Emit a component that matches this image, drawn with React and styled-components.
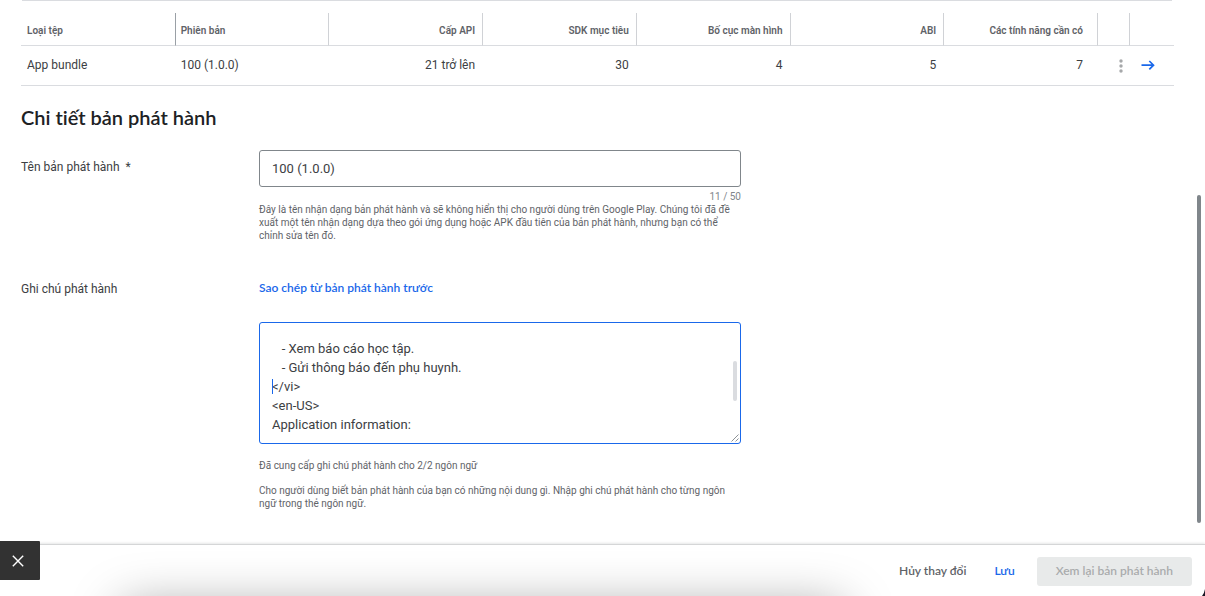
import React from "react";
import styled, { createGlobalStyle } from "styled-components";

const BLUE = "#1a68ea";
const ROBOTO = 'Roboto, "Noto Sans", sans-serif';
const DISPLAY = 'Lato, "Noto Sans", sans-serif';

const GlobalStyle = createGlobalStyle`
  *, *::before, *::after { box-sizing: border-box; }
  body {
    margin: 0;
    background: #fff;
    color: #3c4043;
    font-family: ${ROBOTO};
    font-size: 12px;
    line-height: 16px;
    font-variant-ligatures: none;
  }
`;

const Page = styled.div`
  position: relative;
  display: flex;
  flex-direction: column;
  min-height: 100vh;
  overflow: hidden;
`;

const Main = styled.main`
  flex: 1;
  padding: 0 31px 32px 21px;
`;

const TopRule = styled.hr`
  height: 1px;
  margin: 0 2px 12px 1px;
  border: 0;
  background: #dadce0;
`;

const Table = styled.table`
  width: 100%;
  table-layout: fixed;
  border-collapse: separate;
  border-spacing: 0;
`;

const HeadCell = styled.th`
  height: 33px;
  padding: 4px ${(p) => (p.$wide ? 14 : 7)}px 0 ${(p) => (p.$first ? 6 : 5)}px;
  border-left: ${(p) => (p.$first ? "0" : `1px solid ${p.$strong ? "#9aa0a6" : "#d0d2d6"}`)};
  border-bottom: 1px solid #dadce0;
  color: #5f6368;
  font-size: 10px;
  font-weight: 600;
  text-align: ${(p) => (p.$left ? "left" : "right")};
  white-space: nowrap;
`;

const Cell = styled.td`
  height: 40px;
  padding: 0 ${(p) => (p.$wide ? 14 : 7)}px 1px 6px;
  border-bottom: 1px solid #dadce0;
  text-align: ${(p) => (p.$left ? "left" : "right")};
  white-space: nowrap;
`;

const ActionCell = styled(Cell)`
  padding: 0 0 1px;
  text-align: left;
`;

const Col = styled.col`
  width: ${(p) => p.$width}px;
`;

const IconButton = styled.button`
  display: flex;
  align-items: center;
  justify-content: center;
  width: 16px;
  height: 16px;
  margin-left: ${(p) => p.$inset}px;
  padding: 0;
  border: 0;
  background: none;
  cursor: pointer;
`;

const Title = styled.h2`
  margin: 19px 0 21px;
  color: #202124;
  font-family: ${DISPLAY};
  font-size: 20px;
  font-weight: 600;
  line-height: 24px;
`;

const FormRow = styled.div`
  display: grid;
  grid-template-columns: 238px minmax(0, 482px);
  margin-top: ${(p) => p.$gap}px;
`;

const Label = styled.label`
  padding-top: ${(p) => p.$top}px;
  white-space: pre;
`;

const Field = styled.div`
  display: flex;
  flex-direction: column;
`;

const TextInput = styled.input`
  width: 100%;
  height: 37px;
  padding: 0 12px;
  border: 1px solid #80868b;
  border-radius: 3px;
  outline: 0;
  background: #fff;
  color: #3c4043;
  font: 13px ${ROBOTO};
`;

const Counter = styled.div`
  margin-top: 3px;
  color: #80868b;
  font-size: 10px;
  line-height: 13px;
  text-align: right;
`;

const Hint = styled.p`
  margin: ${(p) => p.$gap || 0}px 0 0;
  color: #5f6368;
  font-size: 10px;
  line-height: 13px;
`;

const CopyButton = styled.button`
  align-self: flex-start;
  padding: 0;
  border: 0;
  background: none;
  color: ${BLUE};
  font: 600 12px/16px ${DISPLAY};
  cursor: pointer;
`;

const NotesBox = styled.div`
  position: relative;
  display: flex;
  height: 122px;
  margin-top: 26px;
  padding: 16px 12px 8px;
  border: 1px solid ${BLUE};
  border-radius: 3px;
`;

const Notes = styled.textarea`
  width: 100%;
  padding: 0;
  border: 0;
  outline: 0;
  resize: none;
  overflow: hidden;
  background: none;
  color: #3c4043;
  font: 13px/19px ${ROBOTO};
`;

const Caret = styled.span`
  position: absolute;
  top: 56px;
  left: 12px;
  width: 1px;
  height: 15px;
  background: ${BLUE};
`;

const NotesThumb = styled.span`
  position: absolute;
  top: 38px;
  right: 3px;
  width: 4px;
  height: 40px;
  border-radius: 2px;
  background: #dadce0;
`;

const Grip = styled.svg`
  position: absolute;
  right: 1px;
  bottom: 1px;
`;

const PageThumb = styled.div`
  position: absolute;
  top: 195px;
  right: 4px;
  width: 4px;
  height: 328px;
  border-radius: 2px;
  background: #80868b;
`;

const Footer = styled.footer`
  position: relative;
  display: flex;
  align-items: center;
  justify-content: flex-end;
  height: 52px;
  padding: 2px 13px 0 0;
  border-top: 1px solid #d5d6d7;
  box-shadow: 0 -1px 2px rgba(60, 64, 67, 0.12);
`;

const ShadowLayer = styled.div`
  position: absolute;
  inset: 0;
  overflow: hidden;
  pointer-events: none;

  &::after {
    content: "";
    position: absolute;
    top: 100%;
    left: 10%;
    right: 30%;
    height: 60px;
    margin-top: 10px;
    border-radius: 10px;
    box-shadow: 0 0 50px rgba(0, 0, 0, 0.36);
  }
`;

const FooterButton = styled.button`
  position: relative;
  height: 29px;
  padding: 0 ${(p) => p.$pad || 14}px 2px;
  border: 0;
  border-radius: 3px;
  background: ${(p) => (p.$filled ? "#e8eaea" : "transparent")};
  color: ${(p) => p.$color};
  font: 600 12px/16px ${DISPLAY};
`;

const SaveButton = styled(FooterButton)`
  margin-right: 8px;
`;

const CloseButton = styled.button`
  position: absolute;
  bottom: 16px;
  left: 0;
  display: flex;
  align-items: center;
  width: 40px;
  height: 39px;
  padding: 0 0 0 12px;
  border: 0;
  border-radius: 0 1px 1px 0;
  background: #323232;
`;

const Corner = styled.svg`
  position: absolute;
  right: 0;
  bottom: 0;
`;

const columns = [
  { label: "Loại tệp", value: "App bundle", left: true, first: true },
  { label: "Phiên bản", value: "100 (1.0.0)", left: true, strong: true },
  { label: "Cấp API", value: "21 trở lên" },
  { label: "SDK mục tiêu", value: "30" },
  { label: "Bố cục màn hình", value: "4" },
  { label: "ABI", value: "5" },
  { label: "Các tính năng cần có", value: "7", wide: true },
];

const notes = `   - Xem báo cáo học tập.
   - Gửi thông báo đến phụ huynh.
</vi>
<en-US>
Application information:`;

export default function App() {
  return (
    <Page>
      <GlobalStyle />
      <Main>
        <TopRule />
        <Table>
          <colgroup>
            {columns.map((c) => (
              <col key={c.label} />
            ))}
            <Col $width={32} />
            <Col $width={45} />
          </colgroup>
          <thead>
            <tr>
              {columns.map((c) => (
                <HeadCell key={c.label} $left={c.left} $first={c.first} $strong={c.strong} $wide={c.wide}>
                  {c.label}
                </HeadCell>
              ))}
              <HeadCell />
              <HeadCell />
            </tr>
          </thead>
          <tbody>
            <tr>
              {columns.map((c) => (
                <Cell key={c.label} $left={c.left} $wide={c.wide}>
                  {c.value}
                </Cell>
              ))}
              <ActionCell>
                <IconButton $inset={16} aria-label="Tùy chọn">
                  <svg width="16" height="16" viewBox="0 0 16 16" fill="#a6a8aa">
                    <circle cx="8" cy="4" r="1.7" />
                    <circle cx="8" cy="9" r="1.7" />
                    <circle cx="8" cy="14" r="1.7" />
                  </svg>
                </IconButton>
              </ActionCell>
              <ActionCell>
                <IconButton $inset={11} aria-label="Chi tiết">
                  <svg width="16" height="16" viewBox="0 0 16 16" fill="none" stroke={BLUE} strokeWidth="1.7">
                    <path d="M1.5 8.2H13.6M9.3 4L13.5 8.2L9.3 12.4" />
                  </svg>
                </IconButton>
              </ActionCell>
            </tr>
          </tbody>
        </Table>

        <Title>Chi tiết bản phát hành</Title>

        <FormRow $gap={0}>
          <Label htmlFor="release-name" $top={9}>
            {"Tên bản phát hành  *"}
          </Label>
          <Field>
            <TextInput id="release-name" defaultValue="100 (1.0.0)" />
            <Counter>11 / 50</Counter>
            <Hint>
              Đây là tên nhận dạng bản phát hành và sẽ không hiển thị cho người dùng trên Google Play. Chúng tôi đã đề
              xuất một tên nhận dạng dựa theo gói ứng dụng hoặc APK đầu tiên của bản phát hành, nhưng bạn có thể chỉnh
              sửa tên đó.
            </Hint>
          </Field>
        </FormRow>

        <FormRow $gap={38}>
          <Label htmlFor="release-notes" $top={1}>
            Ghi chú phát hành
          </Label>
          <Field>
            <CopyButton>Sao chép từ bản phát hành trước</CopyButton>
            <NotesBox>
              <Notes id="release-notes" defaultValue={notes} spellCheck={false} />
              <Caret />
              <NotesThumb />
              <Grip width="8" height="8" viewBox="0 0 8 8" stroke="#80868b" strokeWidth="0.9">
                <path d="M0.5 7.5L7.5 0.5M4.5 7.5L7.5 4.5" />
              </Grip>
            </NotesBox>
            <Hint $gap={15}>Đã cung cấp ghi chú phát hành cho 2/2 ngôn ngữ</Hint>
            <Hint $gap={12}>
              Cho người dùng biết bản phát hành của bạn có những nội dung gì. Nhập ghi chú phát hành cho từng ngôn ngữ
              trong thẻ ngôn ngữ.
            </Hint>
          </Field>
        </FormRow>
      </Main>

      <Footer>
        <ShadowLayer />
        <FooterButton $color="#5f6368">Hủy thay đổi</FooterButton>
        <SaveButton $color={BLUE}>Lưu</SaveButton>
        <FooterButton $color="#aaacad" $filled $pad={19} disabled>
          Xem lại bản phát hành
        </FooterButton>
      </Footer>

      <CloseButton aria-label="Đóng">
        <svg width="12" height="12" viewBox="0 0 12 12" stroke="#fff" strokeWidth="1.4">
          <path d="M0.8 0.8L11.2 11.2M11.2 0.8L0.8 11.2" />
        </svg>
      </CloseButton>
      <PageThumb />
      <Corner width="3" height="7" viewBox="0 0 3 7">
        <path d="M3 0V7H0Q2.4 4 3 0Z" fill="#1b1524" />
      </Corner>
    </Page>
  );
}
